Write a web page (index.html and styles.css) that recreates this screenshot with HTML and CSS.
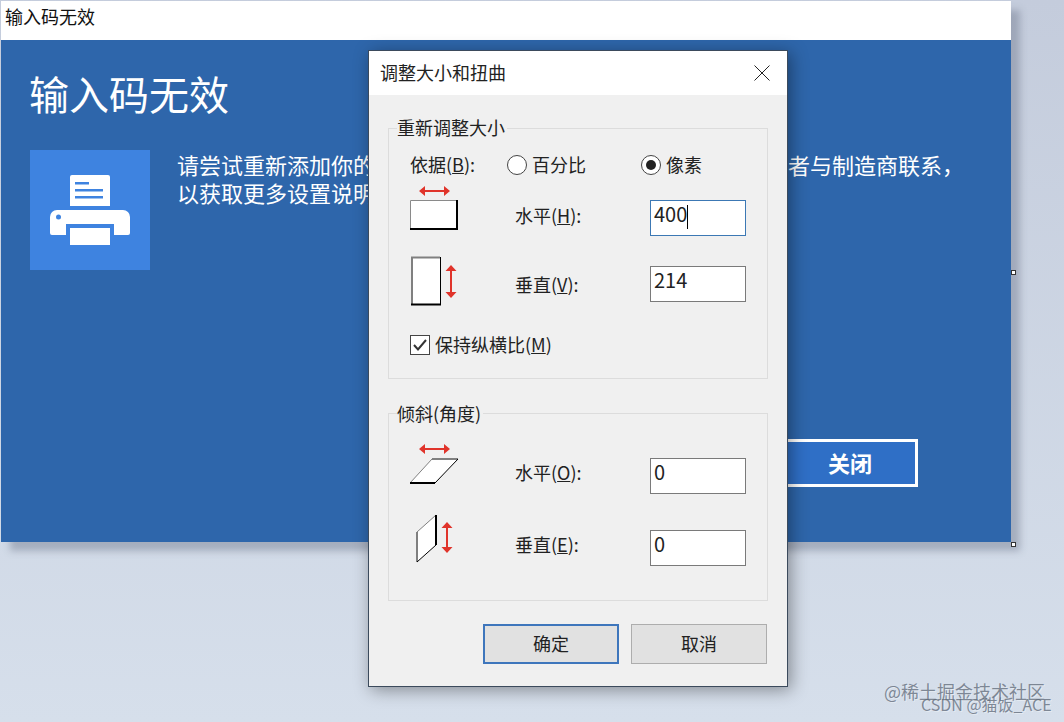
FILE: index.html
```html
<!DOCTYPE html>
<html lang="zh-CN">
<head>
    <meta charset="UTF-8">
    <title>调整大小和扭曲</title>
    <link rel="stylesheet" href="styles.css">
</head>

<body>
    <!--1. 背后的蓝色窗口-->
    <section class="errwin">
        <h2 class="errwin-title">输入码无效</h2>
        <div class="errwin-body">
            <h1 class="errwin-head">输入码无效</h1>
            <div class="errwin-msg">
                <div class="tile">
                    <svg width="80" height="70" viewBox="0 0 80 70">
                        <path fill="#fff" d="M22 0h36a2 2 0 0 1 2 2v29H20V2a2 2 0 0 1 2-2z"/>
                        <path fill="#3e83e0" d="M25 7h14v2.500H25zM25 14h28v2.500H25zM25 21h28v2.500H25z"/>
                        <path fill="#fff" d="M7 35h66a7 7 0 0 1 7 7v16a2 2 0 0 1-2 2H64V49H16v11H2a2 2 0 0 1-2-2V42a7 7 0 0 1 7-7z"/>
                        <circle cx="8.500" cy="42" r="2.500" fill="#3e83e0"/>
                        <path fill="#fff" d="M20 53h40v17H20z"/>
                    </svg>
                </div>
                <!--가운데 글자는 대화상자에 가려져 있음-->
                <p class="errwin-text">
                    <span>请尝试重新添加你的</span><span class="text-tail">或者与制造商联系，</span><br>
                    <span>以获取更多设置说明</span>
                </p>
            </div>
            <div class="errwin-foot">
                <span class="closebtn">关闭</span>
            </div>
        </div>
    </section>

    <!--选择手柄-->
    <i class="handle handle-mid"></i>
    <i class="handle handle-end"></i>

    <!--2. 对话框-->
    <section class="dialog">
        <header class="dialog-bar">
            <span class="dialog-name">调整大小和扭曲</span>
            <svg class="dialog-x" width="16" height="16" viewBox="0 0 16 16">
                <path d="M.5.500l15 15M15.500.500l-15 15" stroke="#222" fill="none"/>
            </svg>
        </header>

        <div class="dialog-body">
            <!--2-1. 重新调整大小-->
            <div class="group group-size">
                <span class="group-name">重新调整大小</span>
                <div class="radios">
                    <span class="radios-label">依据(<u>B</u>):</span>
                    <span class="radio radio-first"><i class="radio-dot"></i><span class="txt">百分比</span></span>
                    <span class="radio"><i class="radio-dot on"></i><span class="txt">像素</span></span>
                </div>
                <div class="rows rows-size">
                    <svg class="ico ico1" width="50" height="46" viewBox="0 0 50 46">
                        <path d="M11 6h27" stroke="#e0342b" stroke-width="2"/>
                        <path d="M9 6l6-5v10zM40 6l-6-5v10z" fill="#e0342b"/>
                        <rect x="0" y="15" width="48" height="30" fill="#fff"/>
                        <path d="M.5 45V15.500H47" stroke="#8a8a8a" fill="none"/>
                        <path d="M47 15v29H0" stroke="#000" stroke-width="2" fill="none"/>
                    </svg>
                    <span class="lbl lbl-up3">水平(<u>H</u>):</span>
                    <div class="field focus">400<i class="caret"></i></div>

                    <svg class="ico ico2" width="50" height="52" viewBox="0 0 50 52">
                        <rect x="1" y="2" width="30" height="48" fill="#fff"/>
                        <path d="M2 50V2.500H30" stroke="#808080" stroke-width="2" fill="none"/>
                        <path d="M30.500 2v47" stroke="#000" fill="none"/>
                        <path d="M1 49.500h30" stroke="#000" stroke-width="2"/>
                        <path d="M41 13v28" stroke="#e0342b" stroke-width="2"/>
                        <path d="M41 10l-5.500 6h11zM41 43l-5.500-6h11z" fill="#e0342b"/>
                    </svg>
                    <span class="lbl">垂直(<u>V</u>):</span>
                    <div class="field">214</div>
                </div>
                <div class="keep">
                    <svg class="check" width="20" height="20" viewBox="0 0 20 20">
                        <rect x=".5" y=".5" width="19" height="19" fill="#fff" stroke="#444"/>
                        <path d="M4 10l4 4.500L16 5" stroke="#333" stroke-width="2" fill="none"/>
                    </svg>
                    <span class="txt">保持纵横比(<u>M</u>)</span>
                </div>
            </div>

            <!--2-2. 倾斜-->
            <div class="group group-skew">
                <span class="group-name">倾斜(角度)</span>
                <div class="rows rows-skew">
                    <svg class="ico ico3" width="50" height="44" viewBox="0 0 50 44">
                        <path d="M11 6h27" stroke="#e0342b" stroke-width="2"/>
                        <path d="M9 6l6-5v10zM40 6l-6-5v10z" fill="#e0342b"/>
                        <path d="M0 40l22-24h26L25 40z" fill="#fff"/>
                        <path d="M0 40l22-24" stroke="#808080" fill="none"/>
                        <path d="M22 16h26" stroke="#808080" stroke-width="2"/>
                        <path d="M48 16L25 40" stroke="#000" fill="none"/>
                        <path d="M0 40h25" stroke="#000" stroke-width="2"/>
                    </svg>
                    <span class="lbl lbl-up4">水平(<u>O</u>):</span>
                    <div class="field">0</div>

                    <svg class="ico ico4" width="50" height="52" viewBox="0 0 50 52">
                        <path d="M7 19l19-17v30L7 49z" fill="#fff"/>
                        <path d="M7 19v30" stroke="#808080" stroke-width="2"/>
                        <path d="M7 19L26 2" stroke="#808080" fill="none"/>
                        <path d="M26 2v30" stroke="#000" stroke-width="2"/>
                        <path d="M26 32L7 49" stroke="#000" fill="none"/>
                        <path d="M37 12v25" stroke="#e0342b" stroke-width="2"/>
                        <path d="M37 9l-5.500 6h11zM37 40l-5.500-6h11z" fill="#e0342b"/>
                    </svg>
                    <span class="lbl lbl-up4">垂直(<u>E</u>):</span>
                    <div class="field">0</div>
                </div>
            </div>

            <!--2-3. 按钮-->
            <div class="btns">
                <span class="btn btn-main">确定</span>
                <span class="btn">取消</span>
            </div>
        </div>
    </section>

    <!--水印-->
    <div class="mark mark1">@稀土掘金技术社区</div>
    <div class="mark mark2">CSDN @猫饭_ACE</div>
</body>
</html>
```

FILE: styles.css
```css
html,
body,
h1,
h2,
p {
    margin: 0;
    padding: 0;
}

body {
    position: relative;
    width: 1064px;
    height: 722px;
    overflow: hidden;
    background: linear-gradient(#c4ccdc, #d6dfeb);
    font-family: "Noto Sans CJK SC", "Liberation Sans", sans-serif;
    font-size: 18px;
    color: #222;
}

/*1. 蓝色窗口*/
.errwin {
    position: absolute;
    top: 1px;
    left: 1px;
    width: 1010px;
    height: 541px;
    display: flex;
    flex-direction: column;
    box-shadow: 9px 9px 7px rgba(110, 120, 140, .45);
}

.errwin-title {
    height: 39px;
    padding-left: 4px;
    background-color: #fff;
    font-size: 18px;
    font-weight: 400;
    line-height: 31px;
    color: #111;
}

.errwin-body {
    flex: 1;
    padding: 23px 93px 0 28px;
    background-color: #2e66ab;
    color: #fff;
}

.errwin-head {
    font-size: 40px;
    font-weight: 400;
    line-height: 60px;
}

.errwin-msg {
    display: flex;
    gap: 28px;
    margin: 27px 0 0 1px;
}

.tile {
    display: flex;
    justify-content: center;
    align-items: center;
    flex: none;
    width: 120px;
    height: 120px;
    background-color: #3e83e0;
}

.errwin-text {
    margin-left: -1px;
    font-size: 22px;
    line-height: 28px;
    white-space: nowrap;
}

/*或 starts at 767px*/
.text-tail {
    margin-left: 391px;
}

.errwin-foot {
    display: flex;
    justify-content: flex-end;
    margin-top: 169px;
}

.closebtn {
    width: 136px;
    height: 48px;
    box-sizing: border-box;
    border: 3px solid #fff;
    background-color: #2f6fc6;
    font-size: 22px;
    font-weight: 700;
    line-height: 40px;
    text-align: center;
}

/*选择手柄*/
.handle {
    position: absolute;
    left: 1011px;
    width: 5px;
    height: 5px;
    box-sizing: border-box;
    border: 1px solid #333;
    background-color: #fff;
}

.handle-mid {
    top: 270px;
}

.handle-end {
    top: 542px;
}

/*2. 对话框*/
.dialog {
    position: absolute;
    top: 50px;
    left: 368px;
    width: 420px;
    height: 637px;
    box-sizing: border-box;
    border: 1px solid #3b4a5c;
    background-color: #f0f0f0;
    box-shadow: 3px 3px 16px rgba(0, 0, 0, .38);
}

.dialog-bar {
    display: flex;
    justify-content: space-between;
    align-items: center;
    height: 44px;
    padding: 0 17px 0 11px;
    background-color: #fff;
}

.dialog-name {
    padding-bottom: 2px;
}

.dialog-body {
    padding: 33px 19px 0;
}

.group {
    position: relative;
    box-sizing: border-box;
    border: 1px solid #dcdcdc;
}

.group-size {
    height: 251px;
    padding: 24px 0 0 21px;
}

.group-skew {
    height: 188px;
    margin-top: 34px;
    padding: 44px 0 0 21px;
}

/*그룹 제목: border 위에 올림*/
.group-name {
    position: absolute;
    top: -15px;
    left: 8px;
    padding-right: 2px;
    background-color: #f0f0f0;
    line-height: 26px;
}

.group-skew .group-name {
    top: -14px;
}

.txt {
    padding-bottom: 2px;
}

.radios {
    display: flex;
    align-items: center;
    height: 24px;
}

.radios-label {
    width: 97px;
    padding-bottom: 2px;
}

.radio {
    display: flex;
    align-items: center;
    gap: 5px;
}

.radio-first {
    width: 134px;
}

.radio-dot {
    position: relative;
    width: 20px;
    height: 20px;
    box-sizing: border-box;
    border: 1px solid #444;
    border-radius: 50%;
    background-color: #fff;
}

.radio-dot.on::after {
    content: "";
    position: absolute;
    top: 4px;
    left: 4px;
    width: 10px;
    height: 10px;
    border-radius: 50%;
    background-color: #222;
}

.rows {
    display: grid;
    grid-template-columns: 105px 135px 96px;
    align-items: center;
}

.rows-size {
    grid-auto-rows: 36px;
    row-gap: 30px;
    margin-top: 23px;
}

.rows-skew {
    grid-auto-rows: 36px;
    row-gap: 36px;
}

.lbl-up3 {
    padding-bottom: 6px;
}

.lbl-up4 {
    padding-bottom: 8px;
}

/*아이콘은 행보다 크다*/
.ico {
    display: block;
    align-self: start;
}

.ico1 {
    margin-top: -15px;
}

.ico2 {
    margin-top: -11px;
}

.ico3 {
    margin-top: -15px;
}

.ico4 {
    margin-top: -17px;
}

.field {
    height: 36px;
    box-sizing: border-box;
    padding-left: 3px;
    border: 1px solid #7a7a7a;
    background-color: #fff;
    font-size: 20px;
    line-height: 26px;
}

.field.focus {
    border-color: #3c78b4;
}

.caret {
    display: inline-block;
    width: 1px;
    height: 24px;
    vertical-align: -7px;
    background-color: #000;
}

.keep {
    display: flex;
    align-items: center;
    gap: 5px;
    height: 24px;
    margin-top: 31px;
}

.check {
    display: block;
}

.btns {
    display: flex;
    justify-content: flex-end;
    gap: 12px;
    margin-top: 23px;
    padding-right: 1px;
}

.btn {
    width: 136px;
    height: 40px;
    box-sizing: border-box;
    border: 1px solid #adadad;
    background-color: #e1e1e1;
    line-height: 36px;
    text-align: center;
}

.btn-main {
    border: 2px solid #3e76bc;
    line-height: 34px;
}

/*水印*/
.mark {
    position: absolute;
    color: rgba(95, 105, 120, .75);
    white-space: nowrap;
    text-shadow: 1px 1px 0 rgba(255, 255, 255, .35);
}

.mark1 {
    top: 678px;
    left: 884px;
    font-size: 18px;
    line-height: 26px;
}

.mark2 {
    top: 693px;
    left: 921px;
    font-size: 16px;
    line-height: 22px;
}
```
